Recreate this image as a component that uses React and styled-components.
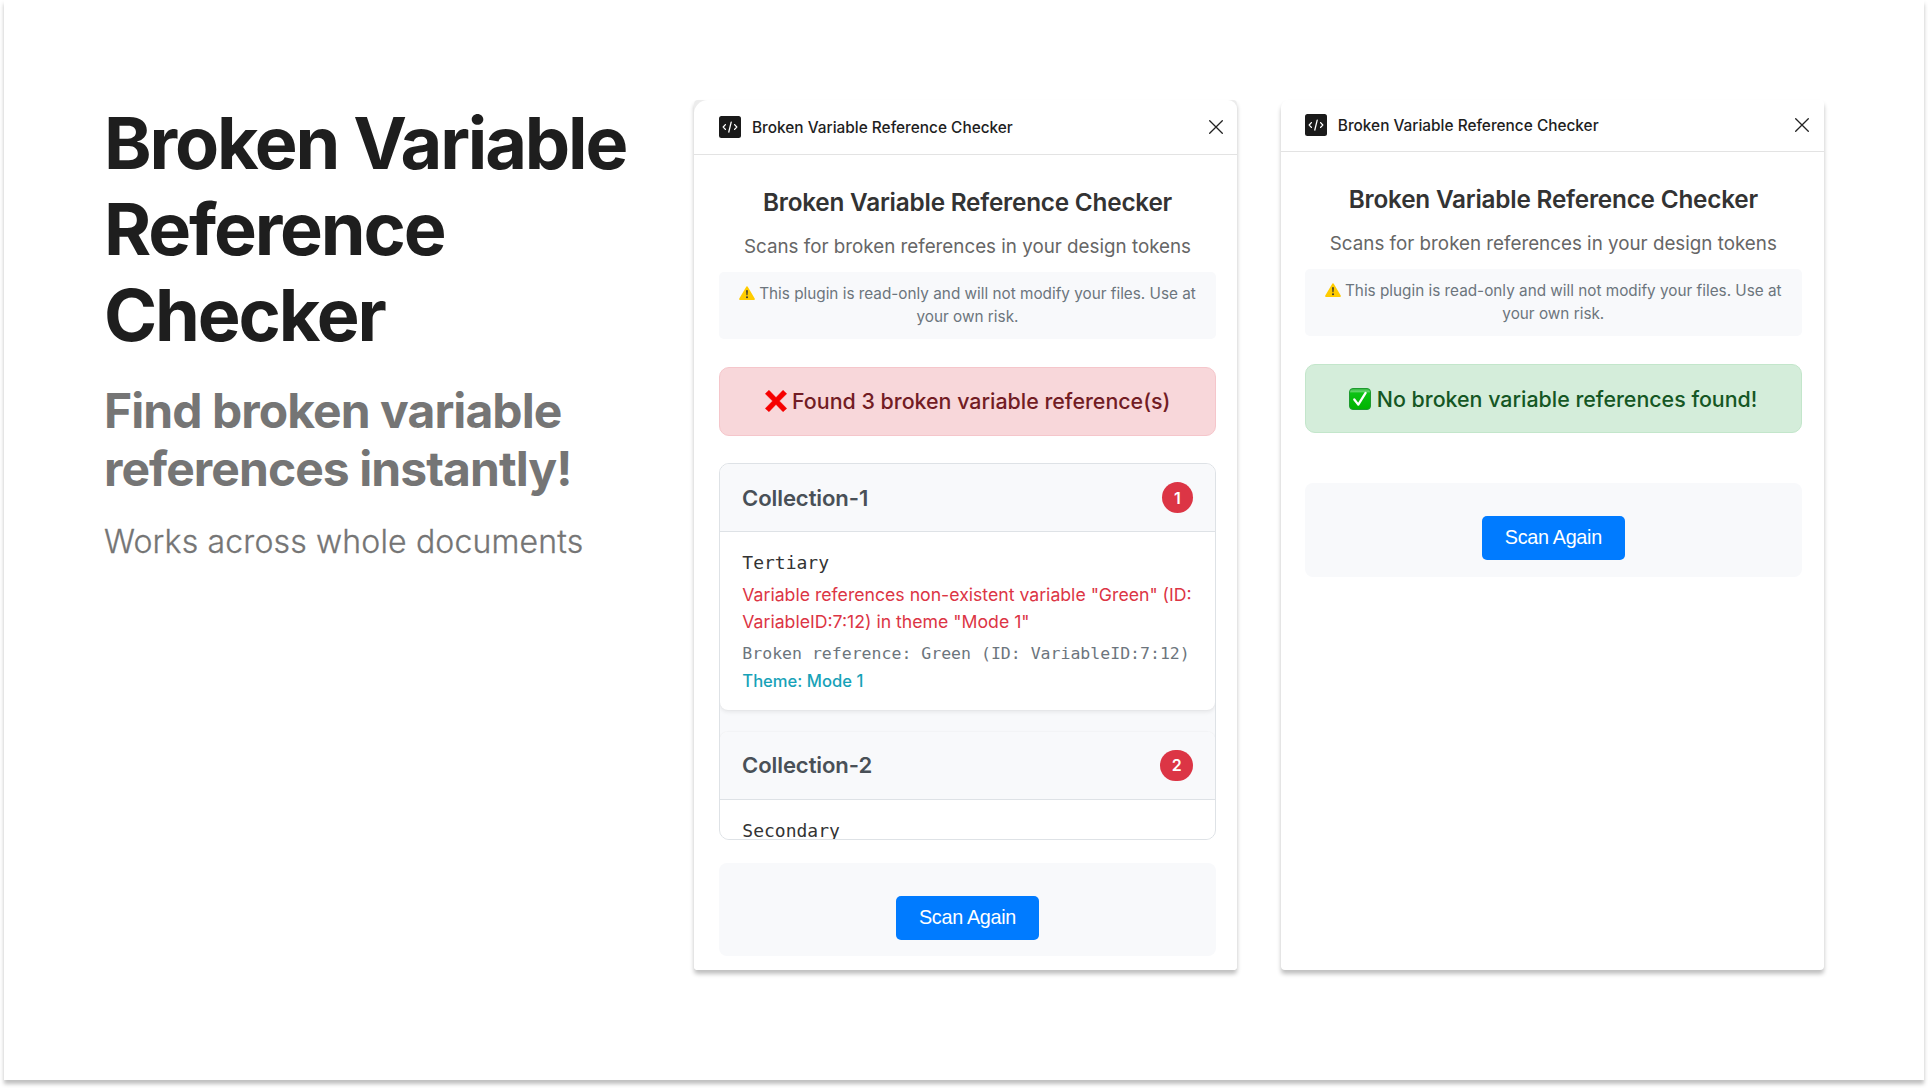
import React from "react";
import styled, { createGlobalStyle, css } from "styled-components";

const GlobalStyle = createGlobalStyle`
  *, *::before, *::after { box-sizing: border-box; }
  body { margin: 0; background: #fff; font-family: Inter, "Liberation Sans", sans-serif; overflow: hidden; }
  h1, h2, h3, p { margin: 0; }
`;

const Slide = styled.main`
  width: 1920px;
  height: 1080px;
  margin: 0 4px 8px;
  padding: 100px 100px 0;
  display: flex;
  align-items: flex-start;
  background: #fff;
  box-shadow: 0 4px 4px rgba(0, 0, 0, 0.25);
`;

const Intro = styled.section`
  flex: 0 0 590px;
  padding-right: 34px;
`;

const Headline = styled.h1`
  font-size: 72px;
  line-height: 86px;
  font-weight: 700;
  letter-spacing: -2.16px;
  color: #1e1e1e;
`;

const Tagline = styled.h2`
  margin-top: 24px;
  font-size: 48px;
  line-height: 58px;
  font-weight: 700;
  letter-spacing: -0.94px;
  color: #757575;
`;

const Caption = styled.p`
  margin-top: 25.4px;
  font-size: 32px;
  line-height: 38.4px;
  font-weight: 300;
  letter-spacing: 0.16px;
  color: #757575;
  -webkit-text-stroke: 0.3px #757575;
`;

const Panels = styled.div`
  display: flex;
  gap: 44px;
`;

const Panel = styled.article`
  width: 543px;
  height: 870px;
  overflow: hidden;
  border-radius: ${(p) => (p.$tinted ? "4px" : "8px 4px 4px 4px")};
  background: ${(p) => (p.$tinted ? "linear-gradient(#ececec 12px, #fff 12px)" : "#fff")};
  box-shadow: 0 4px 4px rgba(0, 0, 0, 0.25);
`;

const Sheet = styled.div`
  height: 100%;
  margin-top: ${(p) => (p.$lift ? "-2.7px" : "0")};
  border-radius: 14px 9px 0 0;
  background: #fff;
`;

const TitleBar = styled.header`
  height: 54.5px;
  padding: 1px ${(p) => (p.$lift ? "15px 0 23.8px" : "14px 0 25px")};
  display: flex;
  align-items: center;
  gap: 11px;
  border-bottom: 1px solid #e3e3e3;
`;

const TitleBarText = styled.span`
  flex: 1;
  padding-top: 1px;
  font-size: 15.4px;
  font-weight: 500;
  color: #1e1e1e;
  white-space: nowrap;
`;

const Body = styled.div`
  padding: 32.4px ${(p) => (p.$lift ? "22.2px 0 23.8px" : "21px 0 25px")};
  display: flex;
  flex-direction: column;
`;

const Title = styled.h2`
  font-size: 24.3px;
  line-height: 30px;
  font-weight: 600;
  letter-spacing: -0.2px;
  color: #333;
  text-align: center;
  white-space: nowrap;
`;

const Subtitle = styled.p`
  margin-top: 15.8px;
  font-size: 18.8px;
  line-height: 28px;
  color: #666;
  text-align: center;
  white-space: nowrap;
`;

const Notice = styled.p`
  margin-top: 11.1px;
  height: 67.3px;
  padding: 11.2px 0 0;
  border-radius: 5px;
  background: #f8f9fb;
  font-size: 15.3px;
  line-height: 22.7px;
  color: #6c757d;
  text-align: center;
  white-space: pre-line;
  svg { vertical-align: -1px; margin-right: 4px; }
`;

const tones = {
  error: css`background: #f8d7da; border-color: #f5c6cb; color: #721c24;`,
  success: css`background: #d4edda; border-color: #c3e6cb; color: #155724;`,
};

const Alert = styled.div`
  margin-top: 27.7px;
  height: 69px;
  display: flex;
  align-items: center;
  justify-content: center;
  gap: 5.5px;
  border: 1px solid;
  border-radius: 10px;
  font-size: 21.4px;
  font-weight: 500;
  white-space: nowrap;
  ${(p) => tones[p.$tone]}
`;

const Results = styled.div`
  margin-top: 27.6px;
  height: 376.7px;
  overflow: hidden;
  border: 1px solid #dee2e6;
  border-radius: 10px;
  background: #f8f9fb;
`;

const Collection = styled.section`
  margin-bottom: 21.6px;
  overflow: hidden;
  border-radius: 8px;
  background: #fff;
  box-shadow: 0 2px 4px rgba(0, 0, 0, 0.08), 0 0 2px rgba(0, 0, 0, 0.05);
`;

const CollectionHeader = styled.header`
  height: 68px;
  padding: 0 22px 0 22px;
  display: flex;
  align-items: center;
  justify-content: space-between;
  background: #f8f9fb;
  border-bottom: 1px solid #dee2e6;
`;

const CollectionName = styled.h3`
  font-size: 22.1px;
  font-weight: 600;
  letter-spacing: -0.1px;
  color: #495057;
`;

const Badge = styled.span`
  height: 30.8px;
  padding: 0 11.4px;
  min-width: 31px;
  display: flex;
  align-items: center;
  justify-content: center;
  border-radius: 16px;
  background: #dc3545;
  color: #fff;
  font-size: 16px;
  font-weight: 600;
`;

const Issue = styled.div`
  padding: 16.7px 0 17.4px 22.3px;
  white-space: pre;
`;

const mono = css`font-family: "DejaVu Sans Mono", "Liberation Mono", monospace;`;

const VariableName = styled.p`
  ${mono}
  font-size: 18px;
  line-height: 27px;
  color: #333;
`;

const Message = styled.p`
  margin-top: 5.3px;
  font-size: 17.67px;
  line-height: 27.1px;
  color: #dc3545;
`;

const Detail = styled.p`
  ${mono}
  margin-top: 5.4px;
  font-size: 16.53px;
  line-height: 25px;
  color: #6c757d;
`;

const Theme = styled.p`
  margin-top: 3px;
  font-size: 16.6px;
  line-height: 24px;
  font-weight: 500;
  color: #17a2b8;
`;

const Actions = styled.footer`
  margin-top: ${(p) => p.$space}px;
  height: 93.6px;
  padding-top: 33px;
  display: flex;
  justify-content: center;
  align-items: flex-start;
  border-radius: 8px;
  background: #f8f9fb;
`;

const Button = styled.button`
  width: 142.5px;
  height: 44.3px;
  padding: 0 0 1px;
  border: 0;
  border-radius: 5px;
  background: #007bff;
  color: #fff;
  font: 400 19.8px "Liberation Sans", Arial, sans-serif;
  letter-spacing: -0.3px;
`;

const PluginIcon = () => (
  <svg width="22" height="22" viewBox="0 0 22 22" fill="none">
    <rect width="22" height="22" rx="2.5" fill="#1a1a1a" />
    <path d="M6.4 8.6 4.2 11l2.2 2.4M15.6 8.6l2.2 2.4-2.2 2.4M12.2 6.2 9.8 16" stroke="#fff" strokeWidth="1.3" strokeLinecap="round" strokeLinejoin="round" />
  </svg>
);

const CloseIcon = () => (
  <svg width="14" height="14" viewBox="0 0 14 14" stroke="#222" strokeWidth="1.3" strokeLinecap="round">
    <path d="M.7.7l12.6 12.6M13.3.7.7 13.3" />
  </svg>
);

const WarningIcon = () => (
  <svg width="16" height="14" viewBox="0 0 16 14">
    <path d="M8 .3c.4 0 .7.2.9.6l6.8 11.7c.4.7 0 1.3-.7 1.3H1c-.7 0-1.1-.6-.7-1.3L7.1.9C7.3.5 7.6.3 8 .3z" fill="#fc0" />
    <path d="M7.1 4.3h1.8l-.4 5h-1z" fill="#333" />
    <circle cx="8" cy="11.3" r="1" fill="#333" />
  </svg>
);

const CrossIcon = () => (
  <svg width="22" height="22" viewBox="0 0 22 22">
    <path d="M4 .3 11 7.6 18 .3 21.7 3.7 14.4 11l7.3 7.5L18 21.7l-7-7.3-7 7.3L.3 18.5 7.6 11 .3 3.7z" fill="#f60000" stroke="#f60000" strokeWidth=".5" strokeLinejoin="round" />
  </svg>
);

const CheckIcon = () => (
  <svg width="22" height="22" viewBox="0 0 22 22" fill="none">
    <defs>
      <linearGradient id="check-fill" x1="0" y1="0" x2="0" y2="1">
        <stop offset="0" stopColor="#2fb53c" />
        <stop offset=".14" stopColor="#5fd566" />
        <stop offset=".22" stopColor="#0cc214" />
        <stop offset="1" stopColor="#00b400" />
      </linearGradient>
    </defs>
    <rect x=".5" y=".5" width="21" height="21" rx="3.5" fill="url(#check-fill)" stroke="#1f9a30" />
    <path d="M5.3 11.5 9.3 16.6 16.6 4.9" stroke="#fff" strokeWidth="2.3" strokeLinecap="round" strokeLinejoin="round" />
  </svg>
);

const collections = [
  {
    name: "Collection-1",
    count: 1,
    variable: "Tertiary",
    message: 'Variable references non-existent variable "Green" (ID:\nVariableID:7:12) in theme "Mode 1"',
    detail: "Broken reference: Green (ID: VariableID:7:12)",
    theme: "Theme: Mode 1",
  },
  { name: "Collection-2", count: 2, variable: "Secondary" },
];

function PluginWindow({ lift, tone, icon, status, space, children }) {
  return (
    <Panel $tinted={!lift}>
      <Sheet $lift={lift}>
        <TitleBar $lift={lift}>
          <PluginIcon />
          <TitleBarText>Broken Variable Reference Checker</TitleBarText>
          <CloseIcon />
        </TitleBar>
        <Body $lift={lift}>
          <Title>Broken Variable Reference Checker</Title>
          <Subtitle>Scans for broken references in your design tokens</Subtitle>
          <Notice>
            <WarningIcon />
            {"This plugin is read-only and will not modify your files. Use at\nyour own risk."}
          </Notice>
          <Alert $tone={tone}>
            {icon}
            <span>{status}</span>
          </Alert>
          {children}
          <Actions $space={space}>
            <Button>Scan Again</Button>
          </Actions>
        </Body>
      </Sheet>
    </Panel>
  );
}

export default function App() {
  return (
    <>
      <GlobalStyle />
      <Slide>
        <Intro>
          <Headline>Broken Variable Reference Checker</Headline>
          <Tagline>Find broken variable references instantly!</Tagline>
          <Caption>Works across whole documents</Caption>
        </Intro>
        <Panels>
          <PluginWindow tone="error" icon={<CrossIcon />} status="Found 3 broken variable reference(s)" space={22.5}>
            <Results>
              {collections.map((c) => (
                <Collection key={c.name}>
                  <CollectionHeader>
                    <CollectionName>{c.name}</CollectionName>
                    <Badge>{c.count}</Badge>
                  </CollectionHeader>
                  <Issue>
                    <VariableName>{c.variable}</VariableName>
                    {c.message && <Message>{c.message}</Message>}
                    {c.detail && <Detail>{c.detail}</Detail>}
                    {c.theme && <Theme>{c.theme}</Theme>}
                  </Issue>
                </Collection>
              ))}
            </Results>
          </PluginWindow>
          <PluginWindow lift tone="success" icon={<CheckIcon />} status="No broken variable references found!" space={50} />
        </Panels>
      </Slide>
    </>
  );
}
